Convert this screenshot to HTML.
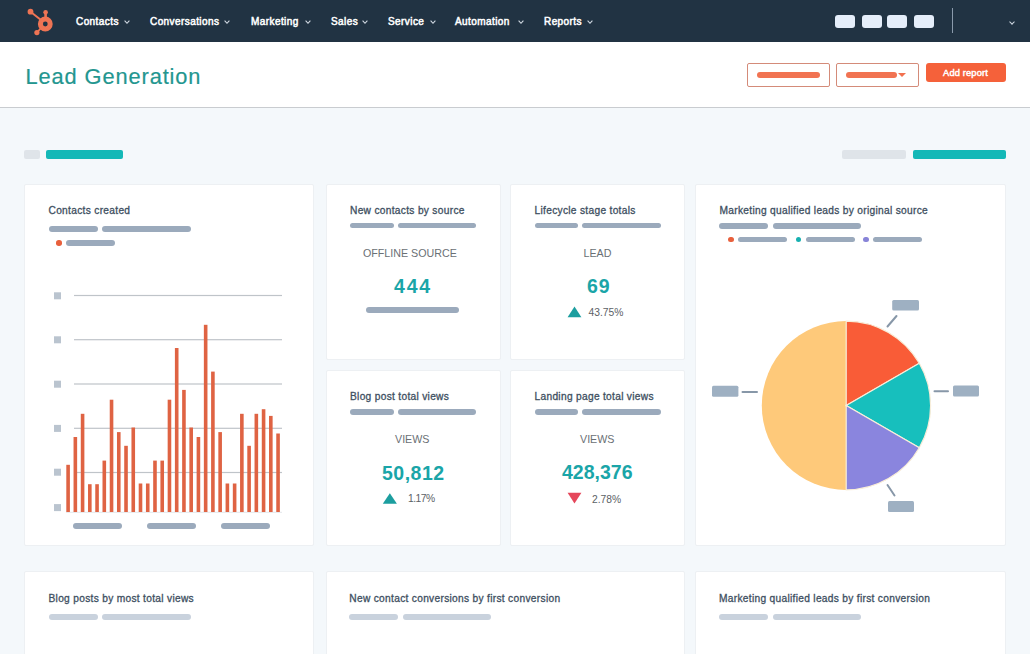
<!DOCTYPE html>
<html><head><meta charset="utf-8">
<style>
*{margin:0;padding:0;box-sizing:border-box}
html,body{width:1030px;height:654px;overflow:hidden;background:#f4f8fb;font-family:"Liberation Sans",sans-serif}
.a{position:absolute}
#nav{left:0;top:0;width:1030px;height:42px;background:#213343}
.nv{position:absolute;top:16.3px;font-weight:normal;font-size:10px;letter-spacing:0.42px;-webkit-text-stroke:0.5px #fff;line-height:12px;color:#fff;white-space:nowrap}
.chev{position:absolute;width:4px;height:4px;border-right:1.2px solid #cfd8e2;border-bottom:1.2px solid #cfd8e2;transform:rotate(45deg)}
#hdr{left:0;top:42px;width:1030px;height:65px;background:#fff}
#hline{left:0;top:107px;width:1030px;height:1px;background:#c9ccd0}
.card{position:absolute;background:#fff;border:1px solid #edf0f3;border-radius:2px}
.ttl{position:absolute;font-weight:normal;font-size:10.2px;letter-spacing:0.3px;-webkit-text-stroke:0.3px #3e4f61;line-height:12px;color:#3e4f61;white-space:nowrap}
.bar{position:absolute;height:5.5px;border-radius:3px;background:#9baabc}
.lbar{position:absolute;height:6px;border-radius:3px;background:#c9d2dd}
.cap{position:absolute;font-size:10.7px;line-height:12px;color:#6a7075;white-space:nowrap}
.big{position:absolute;font-weight:bold;font-size:19.5px;line-height:20px;color:#1aa5a8;white-space:nowrap}
.pct{position:absolute;font-size:10.3px;line-height:12px;color:#5b6166;white-space:nowrap}
.dot{position:absolute;width:5.5px;height:5.5px;border-radius:50%}
</style></head><body>
<div id="nav" class="a">
  <svg class="a" style="left:24px;top:6px" width="32" height="32" viewBox="0 0 32 32">
    <g fill="none" stroke="#ee7454" stroke-linecap="round">
      <line x1="6.5" y1="5.7" x2="17" y2="14" stroke-width="2"/>
      <line x1="21.6" y1="6.2" x2="21.6" y2="13" stroke-width="2.6"/>
      <line x1="12.9" y1="26.6" x2="17" y2="22" stroke-width="1.8"/>
    </g>
    <circle cx="21.3" cy="18" r="4.9" fill="none" stroke="#ee7454" stroke-width="5"/>
    <circle cx="6.5" cy="5.7" r="2.9" fill="#ee7454"/>
    <circle cx="21.6" cy="6.2" r="2.3" fill="#ee7454"/>
    <circle cx="12.9" cy="26.6" r="2.6" fill="#ee7454"/>
  </svg>
  <div class="nv" style="left:76px">Contacts</div><svg class="a" style="left:123.6px;top:20.2px" width="6" height="4.5" viewBox="0 0 6 4.5"><polyline points="0.6,0.7 3,3.3 5.4,0.7" fill="none" stroke="#d5dde6" stroke-width="1.1"/></svg>
  <div class="nv" style="left:150px">Conversations</div><svg class="a" style="left:224.4px;top:20.2px" width="6" height="4.5" viewBox="0 0 6 4.5"><polyline points="0.6,0.7 3,3.3 5.4,0.7" fill="none" stroke="#d5dde6" stroke-width="1.1"/></svg>
  <div class="nv" style="left:251px">Marketing</div><svg class="a" style="left:305px;top:20.2px" width="6" height="4.5" viewBox="0 0 6 4.5"><polyline points="0.6,0.7 3,3.3 5.4,0.7" fill="none" stroke="#d5dde6" stroke-width="1.1"/></svg>
  <div class="nv" style="left:331px">Sales</div><svg class="a" style="left:362.2px;top:20.2px" width="6" height="4.5" viewBox="0 0 6 4.5"><polyline points="0.6,0.7 3,3.3 5.4,0.7" fill="none" stroke="#d5dde6" stroke-width="1.1"/></svg>
  <div class="nv" style="left:388px">Service</div><svg class="a" style="left:429.9px;top:20.2px" width="6" height="4.5" viewBox="0 0 6 4.5"><polyline points="0.6,0.7 3,3.3 5.4,0.7" fill="none" stroke="#d5dde6" stroke-width="1.1"/></svg>
  <div class="nv" style="left:455px">Automation</div><svg class="a" style="left:518px;top:20.2px" width="6" height="4.5" viewBox="0 0 6 4.5"><polyline points="0.6,0.7 3,3.3 5.4,0.7" fill="none" stroke="#d5dde6" stroke-width="1.1"/></svg>
  <div class="nv" style="left:544px">Reports</div><svg class="a" style="left:587.4px;top:20.2px" width="6" height="4.5" viewBox="0 0 6 4.5"><polyline points="0.6,0.7 3,3.3 5.4,0.7" fill="none" stroke="#d5dde6" stroke-width="1.1"/></svg>
  <div class="a" style="left:835px;top:15px;width:20px;height:13px;border-radius:3px;background:#e5eefa"></div>
  <div class="a" style="left:862px;top:15px;width:20px;height:13px;border-radius:3px;background:#e5eefa"></div>
  <div class="a" style="left:887px;top:15px;width:20px;height:13px;border-radius:3px;background:#e5eefa"></div>
  <div class="a" style="left:914px;top:15px;width:20px;height:13px;border-radius:3px;background:#e5eefa"></div>
  <div class="a" style="left:952px;top:8px;width:1.2px;height:25px;background:#8a9aab"></div>
  <div class="chev" style="left:1009.6px;top:20px"></div>
</div>
<div id="hdr" class="a">
  <div class="a" style="left:25.5px;top:21.5px;font-size:21.8px;letter-spacing:0.9px;line-height:26px;color:#23968f;-webkit-text-stroke:0.2px #23968f;white-space:nowrap">Lead Generation</div>
  <div class="a" style="left:747px;top:21px;width:83px;height:24px;border:1.3px solid #d48b79;border-radius:2px"></div>
  <div class="a" style="left:757px;top:30px;width:63px;height:6px;border-radius:3px;background:#f17352"></div>
  <div class="a" style="left:836px;top:21px;width:82.5px;height:24px;border:1.3px solid #d48b79;border-radius:2px"></div>
  <div class="a" style="left:845.5px;top:30px;width:51px;height:6px;border-radius:3px;background:#f17352"></div>
  <div class="a" style="left:898px;top:31px;width:0;height:0;border-left:4px solid transparent;border-right:4px solid transparent;border-top:4.5px solid #f2704f"></div>
  <div class="a" style="left:925.5px;top:21px;width:80px;height:19px;border-radius:3px;background:#f5613a"></div>
  <div class="a" style="left:925.5px;top:25.8px;width:80px;text-align:center;font-weight:normal;font-size:9.3px;letter-spacing:0.15px;-webkit-text-stroke:0.45px #fff;line-height:11px;color:#fff">Add report</div>
</div>
<div id="hline" class="a"></div>

<!-- filter row -->
<div class="a" style="left:24px;top:150px;width:16px;height:9px;border-radius:2px;background:#dfe4e9"></div>
<div class="a" style="left:46px;top:150px;width:77px;height:9px;border-radius:2px;background:#14b8b7"></div>
<div class="a" style="left:842px;top:150px;width:64px;height:9px;border-radius:2px;background:#dfe4e9"></div>
<div class="a" style="left:912.5px;top:150px;width:93px;height:9px;border-radius:2px;background:#14b8b7"></div>

<!-- cards -->
<div class="card" style="left:24px;top:184px;width:290px;height:361.8px"></div>
<div class="card" style="left:326px;top:184px;width:174.5px;height:176px"></div>
<div class="card" style="left:510.3px;top:184px;width:174.5px;height:176px"></div>
<div class="card" style="left:326px;top:370.3px;width:174.5px;height:175.5px"></div>
<div class="card" style="left:510.3px;top:370.3px;width:174.5px;height:175.5px"></div>
<div class="card" style="left:694.7px;top:184px;width:311px;height:361.8px"></div>
<div class="card" style="left:24px;top:570.5px;width:290px;height:100px"></div>
<div class="card" style="left:326px;top:570.5px;width:359px;height:100px"></div>
<div class="card" style="left:694.7px;top:570.5px;width:311px;height:100px"></div>

<!-- card 1 -->
<div class="ttl" style="left:48.5px;top:205.3px">Contacts created</div>
<div class="bar" style="left:48.5px;top:226px;width:49px"></div>
<div class="bar" style="left:102px;top:226px;width:88.5px"></div>
<div class="dot" style="left:56px;top:240px;background:#e8603c"></div>
<div class="bar" style="left:66px;top:240px;width:49px"></div>
<svg class="a" style="left:0;top:0" width="320" height="560"><rect x="74" y="294.9" width="208" height="1.2" fill="#bfc4c9"/><rect x="74" y="339.1" width="208" height="1.2" fill="#bfc4c9"/><rect x="74" y="383.4" width="208" height="1.2" fill="#bfc4c9"/><rect x="74" y="427.7" width="208" height="1.2" fill="#bfc4c9"/><rect x="74" y="471.9" width="208" height="1.2" fill="#bfc4c9"/><rect x="54" y="292.3" width="7" height="7" fill="#bac4cf"/><rect x="54" y="336.3" width="7" height="7" fill="#bac4cf"/><rect x="54" y="380.7" width="7" height="7" fill="#bac4cf"/><rect x="54" y="424.9" width="7" height="7" fill="#bac4cf"/><rect x="54" y="468.7" width="7" height="7" fill="#bac4cf"/><rect x="54" y="504.1" width="7" height="7" fill="#bac4cf"/><rect x="66" y="511.8" width="216" height="1" fill="#e3e6ea"/><rect x="66.30" y="464.8" width="3.6" height="47.2" fill="#df6343"/><rect x="73.54" y="437" width="3.6" height="75.0" fill="#df6343"/><rect x="80.78" y="413.8" width="3.6" height="98.2" fill="#df6343"/><rect x="88.02" y="484.2" width="3.6" height="27.8" fill="#df6343"/><rect x="95.26" y="484.2" width="3.6" height="27.8" fill="#df6343"/><rect x="102.50" y="460.6" width="3.6" height="51.4" fill="#df6343"/><rect x="109.74" y="399.7" width="3.6" height="112.3" fill="#df6343"/><rect x="116.98" y="432.1" width="3.6" height="79.9" fill="#df6343"/><rect x="124.22" y="445.8" width="3.6" height="66.2" fill="#df6343"/><rect x="131.46" y="427.5" width="3.6" height="84.5" fill="#df6343"/><rect x="138.70" y="483.5" width="3.6" height="28.5" fill="#df6343"/><rect x="145.94" y="483.5" width="3.6" height="28.5" fill="#df6343"/><rect x="153.18" y="460.6" width="3.6" height="51.4" fill="#df6343"/><rect x="160.42" y="460.6" width="3.6" height="51.4" fill="#df6343"/><rect x="167.66" y="399.7" width="3.6" height="112.3" fill="#df6343"/><rect x="174.90" y="348" width="3.6" height="164.0" fill="#df6343"/><rect x="182.14" y="389.9" width="3.6" height="122.1" fill="#df6343"/><rect x="189.38" y="427.5" width="3.6" height="84.5" fill="#df6343"/><rect x="196.62" y="437" width="3.6" height="75.0" fill="#df6343"/><rect x="203.86" y="324.8" width="3.6" height="187.2" fill="#df6343"/><rect x="211.10" y="371.6" width="3.6" height="140.4" fill="#df6343"/><rect x="218.34" y="432.1" width="3.6" height="79.9" fill="#df6343"/><rect x="225.58" y="483.5" width="3.6" height="28.5" fill="#df6343"/><rect x="232.82" y="483.5" width="3.6" height="28.5" fill="#df6343"/><rect x="240.06" y="413.8" width="3.6" height="98.2" fill="#df6343"/><rect x="247.30" y="445.8" width="3.6" height="66.2" fill="#df6343"/><rect x="254.54" y="413.8" width="3.6" height="98.2" fill="#df6343"/><rect x="261.78" y="409.2" width="3.6" height="102.8" fill="#df6343"/><rect x="269.02" y="415.9" width="3.6" height="96.1" fill="#df6343"/><rect x="276.26" y="433.5" width="3.6" height="78.5" fill="#df6343"/></svg>
<div class="lbar" style="left:73px;top:523px;width:49px;background:#9baabc"></div>
<div class="lbar" style="left:147px;top:523px;width:49px;background:#9baabc"></div>
<div class="lbar" style="left:221px;top:523px;width:49px;background:#9baabc"></div>

<!-- card 2 -->
<div class="ttl" style="left:350px;top:205.3px">New contacts by source</div>
<div class="bar" style="left:350px;top:222.5px;width:43.5px"></div>
<div class="bar" style="left:397.5px;top:222.5px;width:78.5px"></div>
<div class="cap" style="left:363px;top:247px">OFFLINE SOURCE</div>
<div class="big" style="left:394px;top:276px;letter-spacing:1.8px">444</div>
<div class="bar" style="left:366px;top:307px;width:93px"></div>

<!-- card 3 -->
<div class="ttl" style="left:534.5px;top:205.3px">Lifecycle stage totals</div>
<div class="bar" style="left:534.5px;top:222.5px;width:43.5px"></div>
<div class="bar" style="left:582px;top:222.5px;width:78.5px"></div>
<div class="cap" style="left:583.5px;top:247px">LEAD</div>
<div class="big" style="left:587px;top:276px;letter-spacing:1px">69</div>
<svg class="a" style="left:0;top:0" width="700" height="560"><polygon points="567.6,317.3 581.4,317.3 574.5,306.6" fill="#1c9e9f"/><polygon points="382.8,503.8 396.9,503.8 389.85,493.3" fill="#1c9e9f"/><polygon points="567.6,492.8 581.4,492.8 574.5,503.6" fill="#e5475b"/></svg>
<div class="pct" style="left:588.5px;top:307.3px">43.75%</div>

<!-- card 4 -->
<div class="ttl" style="left:350px;top:391.3px">Blog post total views</div>
<div class="bar" style="left:350px;top:409px;width:43.5px"></div>
<div class="bar" style="left:397.5px;top:409px;width:78.5px"></div>
<div class="cap" style="left:395px;top:433px">VIEWS</div>
<div class="big" style="left:382px;top:462.5px;letter-spacing:0.5px">50,812</div>

<div class="pct" style="left:408px;top:493.3px;letter-spacing:-0.5px">1.17%</div>

<!-- card 5 -->
<div class="ttl" style="left:534.5px;top:391.3px">Landing page total views</div>
<div class="bar" style="left:534.5px;top:409px;width:43.5px"></div>
<div class="bar" style="left:582px;top:409px;width:78.5px"></div>
<div class="cap" style="left:580px;top:433px">VIEWS</div>
<div class="big" style="left:562px;top:462px;letter-spacing:0px">428,376</div>

<div class="pct" style="left:592px;top:493.5px">2.78%</div>

<!-- card 6 -->
<div class="ttl" style="left:719.5px;top:205.3px">Marketing qualified leads by original source</div>
<div class="bar" style="left:719px;top:223px;width:49px"></div>
<div class="bar" style="left:772.5px;top:223px;width:88px"></div>
<div class="dot" style="left:728px;top:236.5px;background:#e8603c"></div>
<div class="bar" style="left:738px;top:236.5px;width:49px"></div>
<div class="dot" style="left:795.5px;top:236.5px;background:#17b0b0"></div>
<div class="bar" style="left:805.5px;top:236.5px;width:49px"></div>
<div class="dot" style="left:863px;top:236.5px;background:#8884d8"></div>
<div class="bar" style="left:873px;top:236.5px;width:49px"></div>
<svg class="a" style="left:695px;top:260px" width="310" height="280" viewBox="695 260 310 280">
  <circle cx="846.2" cy="405.5" r="84.4" fill="#fec97a"/>
  <path d="M846.2 405.5 L846.2 321.1 A84.4 84.4 0 0 1 919.29 363.3 Z" fill="#f95c37" stroke="#f8eedb" stroke-width="1.2"/>
  <path d="M846.2 405.5 L919.29 363.3 A84.4 84.4 0 0 1 919.29 447.7 Z" fill="#17bfbd" stroke="#f8eedb" stroke-width="1.2"/>
  <path d="M846.2 405.5 L919.29 447.7 A84.4 84.4 0 0 1 846.2 489.9 Z" fill="#8a85de" stroke="#f8eedb" stroke-width="1.2"/>
  <g stroke="#8797a8" stroke-width="2" stroke-linecap="round">
    <line x1="887.5" y1="326.5" x2="896.5" y2="316"/>
    <line x1="934.5" y1="391.2" x2="948" y2="391.2"/>
    <line x1="742.5" y1="392" x2="757" y2="392"/>
    <line x1="887.5" y1="485" x2="894.5" y2="495.5"/>
  </g>
  <g fill="#9eb0c2">
    <rect x="892.2" y="300" width="26.8" height="10.6" rx="1.5"/>
    <rect x="953" y="385.6" width="26" height="11" rx="1.5"/>
    <rect x="712" y="385.8" width="26.4" height="11" rx="1.5"/>
    <rect x="888" y="501" width="26" height="11" rx="1.5"/>
  </g>
</svg>

<!-- row 2 -->
<div class="ttl" style="left:48.5px;top:592.8px">Blog posts by most total views</div>
<div class="lbar" style="left:48.5px;top:614px;width:49px"></div>
<div class="lbar" style="left:102px;top:614px;width:88.5px"></div>
<div class="ttl" style="left:349.3px;top:592.8px">New contact conversions by first conversion</div>
<div class="lbar" style="left:349.3px;top:614px;width:48.5px"></div>
<div class="lbar" style="left:402.5px;top:614px;width:88.5px"></div>
<div class="ttl" style="left:719px;top:592.8px">Marketing qualified leads by first conversion</div>
<div class="lbar" style="left:719px;top:614px;width:49px"></div>
<div class="lbar" style="left:772.5px;top:614px;width:88px"></div>


</body></html>
